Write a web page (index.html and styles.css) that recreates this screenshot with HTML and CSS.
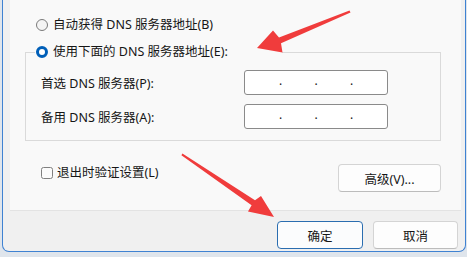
FILE: index.html
```html
<!DOCTYPE html>
<html lang="zh-CN">
<head>
<meta charset="utf-8">
<title>DNS</title>
<link rel="stylesheet" href="styles.css">
</head>
<body>
<div class="window">
  <div class="panel">
    <label class="opt first"><span class="radio"></span><span>自动获得 DNS 服务器地址(B)</span></label>
    <fieldset class="group">
      <legend class="opt legend"><span class="radio on"></span><span>使用下面的 DNS 服务器地址(E):</span></legend>
      <div class="row row1"><span class="lbl">首选 DNS 服务器(P):</span><div class="ip"><span>.</span><span>.</span><span>.</span></div></div>
      <div class="row row2"><span class="lbl">备用 DNS 服务器(A):</span><div class="ip"><span>.</span><span>.</span><span>.</span></div></div>
    </fieldset>
    <div class="bottom">
      <label class="opt check"><span class="box"></span><span>退出时验证设置(L)</span></label>
      <button class="btn adv">高级(V)...</button>
    </div>
  </div>
  <div class="footer">
    <button class="btn ok">确定</button>
    <button class="btn cancel">取消</button>
  </div>
</div>
<svg class="arrows" width="467" height="257" viewBox="0 0 467 257">
  <polygon points="257,48 273,30.5 279,37.5 349.5,10.6 350.5,12.4 281,43.2 282.5,52.5" fill="#f03c3c"/>
  <polygon points="274,217 261,196 255,200.2 182.4,153.6 181.4,155.2 251.6,205.2 248,211.5" fill="#f03c3c"/>
</svg>
</body>
</html>
```
FILE: styles.css
```css
html, body {
  margin: 0;
  padding: 0;
}
body {
  width: 467px;
  height: 257px;
  overflow: hidden;
  background: #dfe5ec;
  font-family: "Noto Sans", "Noto Sans CJK SC", sans-serif;
  font-size: 12.5px;
  color: #161616;
  position: relative;
}
.window {
  margin-left: 2px;
  width: 464px;
  height: 252px;
  box-sizing: border-box;
  border: 1px solid #3f82d2;
  border-top: none;
  border-radius: 0 0 7px 7px;
  background: #f0f0f0;
  overflow: hidden;
}
.panel {
  margin: 0 4px 0 7px;
  height: 211px;
  box-sizing: border-box;
  background: #f9f9f9;
  border-bottom: 1px solid #e3e3e3;
  padding-top: 17px;
}
.opt {
  display: flex;
  align-items: center;
  height: 16px;
  line-height: 16px;
  gap: 5px;
  white-space: nowrap;
}
.first {
  margin-left: 26px;
}
.radio {
  width: 12px;
  height: 12px;
  box-sizing: border-box;
  border-radius: 50%;
  border: 1px solid #7a7a7a;
  background: #f4f4f4;
  flex: 0 0 auto;
}
.radio.on {
  border: 3.5px solid #005fb8;
  background: #ffffff;
}
.group {
  margin: 11px 20px 0 15px;
  padding: 0 0 11px 0;
  border: 1px solid #dadada;
  min-inline-size: 0;
}
.legend {
  margin-left: 9px;
  padding: 0 0 0 1px;
  width: 247px;
  box-sizing: border-box;
}
.row {
  display: flex;
  align-items: center;
  padding-left: 15px;
}
.row1 {
  margin-top: 10px;
}
.row2 {
  margin-top: 9px;
}
.lbl {
  flex: 0 0 203px;
  white-space: nowrap;
}
.ip {
  width: 144px;
  height: 25px;
  box-sizing: border-box;
  border: 1px solid #8a8a8a;
  border-radius: 3px;
  background: #ffffff;
  display: flex;
  padding-left: 34px;
  line-height: 19px;
  font-size: 12px;
}
.ip span {
  flex: 0 0 35.5px;
}
.bottom {
  display: flex;
  justify-content: space-between;
  align-items: flex-start;
  margin-top: 23px;
  padding: 0 20px 0 31px;
}
.check {
  margin-top: 3px;
  height: 12px;
  line-height: 12px;
  gap: 4px;
}
.box {
  width: 12px;
  height: 12px;
  box-sizing: border-box;
  border: 1px solid #808080;
  border-radius: 2.5px;
  background: #fbfbfb;
}
.btn {
  font: inherit;
  color: #161616;
  height: 28px;
  box-sizing: border-box;
  border: 1px solid #d4d4d4;
  border-bottom-color: #bcbcbc;
  border-radius: 4px;
  background: #fdfdfd;
  padding: 0;
  margin: 0;
}
.adv {
  width: 103px;
}
.footer {
  display: flex;
  justify-content: flex-end;
  gap: 10px;
  padding: 10px 7px 0 0;
}
.ok {
  width: 86px;
  border: 1px solid #2a6db0;
  background: #fbfcfd;
}
.cancel {
  width: 85px;
}
.arrows {
  position: absolute;
  left: 0;
  top: 0;
}
```
